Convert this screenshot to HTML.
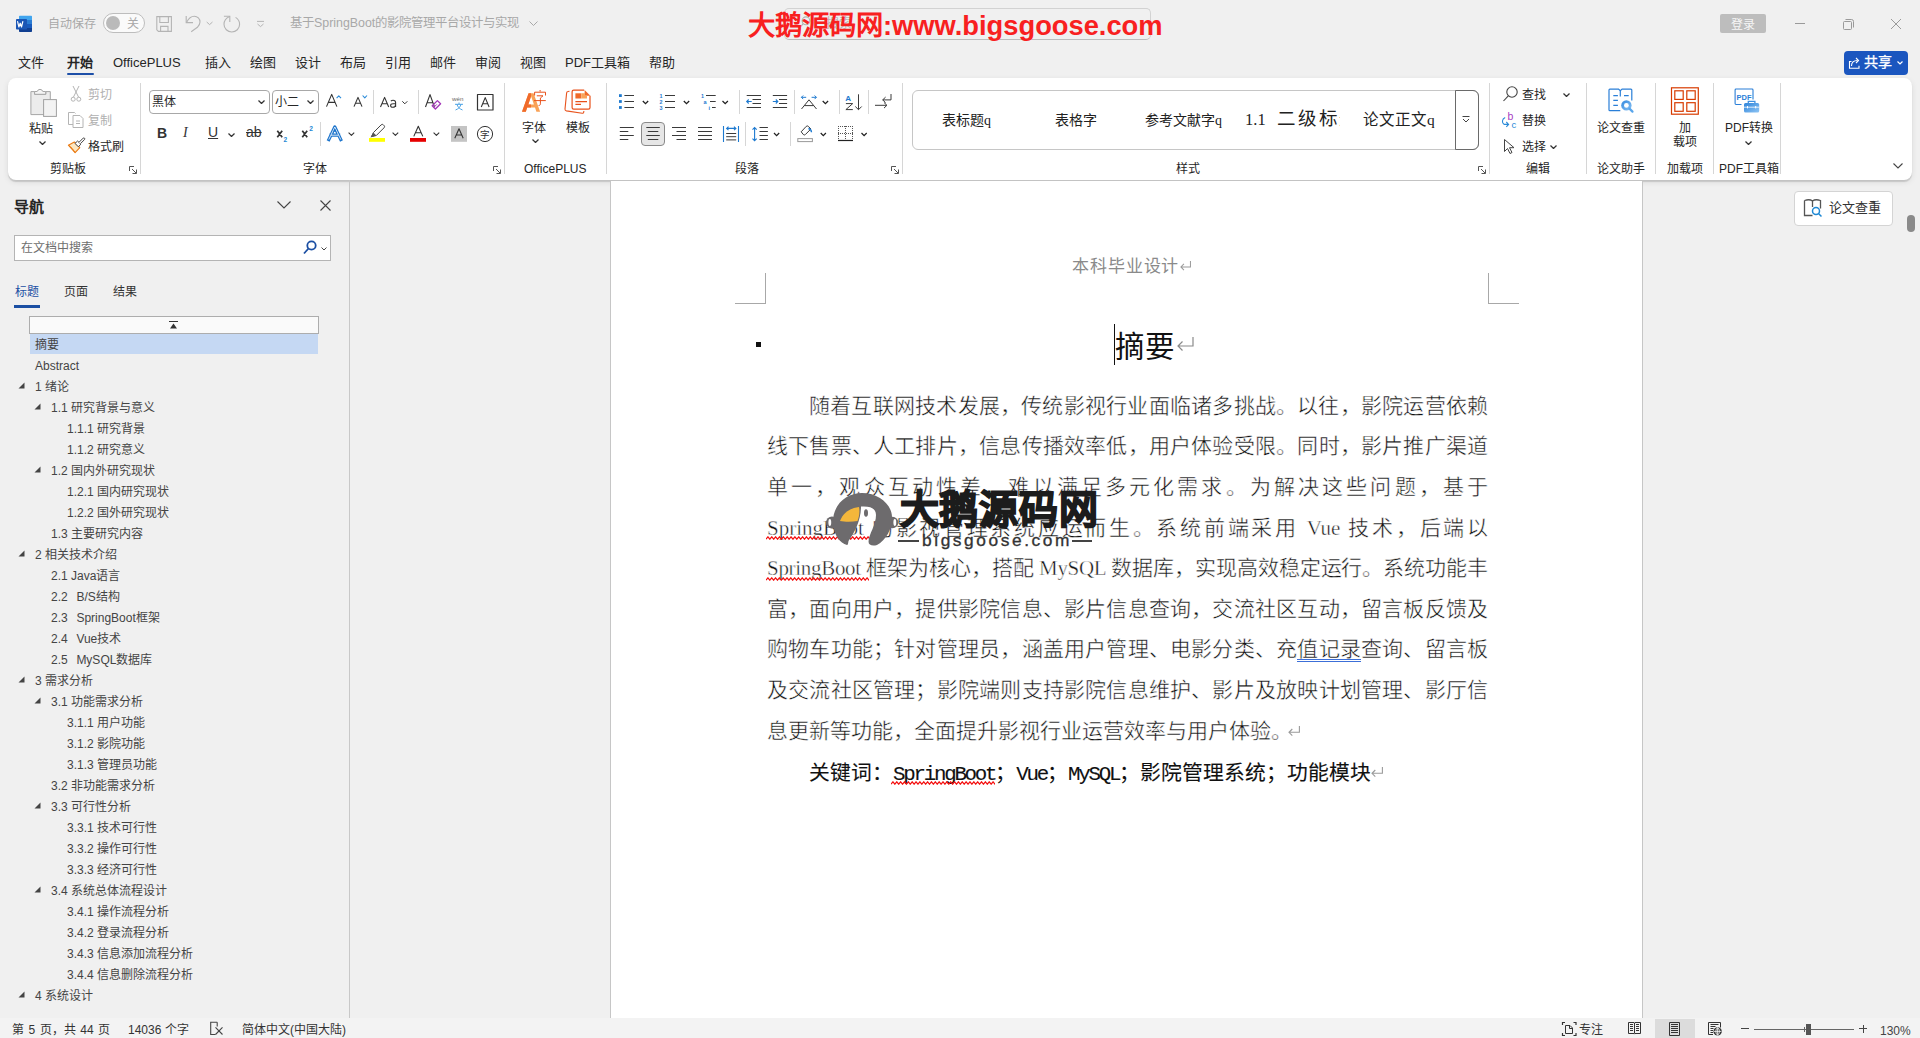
<!DOCTYPE html>
<html lang="zh-CN"><head><meta charset="utf-8">
<style>
*{box-sizing:border-box;margin:0;padding:0}
html,body{width:1920px;height:1038px;overflow:hidden;background:#f0f0f0;font-family:"Liberation Sans",sans-serif;color:#262626}
.a{position:absolute;white-space:nowrap}
.t12{font-size:12px;line-height:16px}
.t13{font-size:13px;line-height:18px}
.sep{position:absolute;width:1px;background:#d6d6d6}
svg{position:absolute;overflow:visible}
.chev{position:absolute;width:8px;height:5px}
</style></head><body>
<!-- ===== TITLE BAR ===== -->
<div id="titlebar">
 <!-- word icon -->
 <svg style="left:15px;top:15px" width="18" height="18" viewBox="15 15 18 18">
  <path d="M19 16.5a.8.8 0 0 1 .8-.8h11.4a.8.8 0 0 1 .8.8V20H19z" fill="#41a5ee"/>
  <rect x="19" y="20" width="13" height="4" fill="#2b7cd3"/><rect x="19" y="24" width="13" height="4" fill="#185abd"/>
  <path d="M19 28h13v3.2a.8.8 0 0 1-.8.8H19.8a.8.8 0 0 1-.8-.8z" fill="#103f91"/>
  <rect x="16" y="19" width="11" height="10.5" rx=".8" fill="#1b56b5"/>
  <path d="M17.6 21.6 18.9 27 20.2 23.2 21.5 27 22.8 21.6" stroke="#fff" stroke-width="1.2" fill="none" stroke-linejoin="round" stroke-linecap="round"/>
 </svg>
 <div class="a" style="left:47.5px;top:15px;font-size:12px;line-height:18px;color:#a8a8a8">自动保存</div>
 <div class="a" style="left:103px;top:13px;width:42px;height:20px;border:1px solid #bdbdbd;border-radius:10px;background:#fafafa"></div>
 <div class="a" style="left:106px;top:16px;width:14px;height:14px;border-radius:50%;background:#bababa"></div>
 <div class="a t12" style="left:127px;top:15.5px;color:#a8a8a8">关</div>
 <!-- save / undo / redo / customize -->
 <svg style="left:150px;top:10px" width="120" height="28" viewBox="150 10 120 28" fill="none" stroke="#b4b4b4" stroke-width="1.1">
  <path d="M156.8 16.6h14.6v14.8h-13l-1.6-1.6z"/><path d="M159.8 16.6v5.9h8.6v-5.9"/><path d="M160.6 31.4v-5h7.4v5"/>
  <path d="M186.2 16v6.6h6.8"/><path d="M186.6 22.2C188.5 18.5 191 16.2 194.2 16.2c3.4 0 5.8 2.6 5.8 5.8 0 2.2-1.2 3.8-2.6 5.3L191.2 31.7"/>
  <path d="M206.7 22 209.6 24.6 212.5 22" stroke-width="1"/>
  <path d="M223.9 16.3h5.9v5.6"/><path d="M229.6 16.5C226.2 18 224 20.8 224 24.3c0 4.3 3.5 7.7 7.8 7.7s7.8-3.4 7.8-7.7c0-3-1.7-5.5-4-6.9"/>
  <path d="M257 21.4h7" stroke-width="1"/><path d="M257.5 24 260.5 26.6 263.5 24" stroke-width="1"/>
 </svg>
 <div class="a" style="left:290px;top:14px;font-size:12.4px;line-height:18px;color:#a8a8a8">基于SpringBoot的影院管理平台设计与实现</div>
 <svg style="left:529px;top:21px" width="9" height="5" viewBox="0 0 9 5" fill="none" stroke="#a8a8a8" stroke-width="1"><path d="M.5.5 4.5 4.5 8.5.5"/></svg>
 <!-- search box -->
 <div class="a" style="left:784px;top:8px;width:367px;height:32px;border:1px solid #d2d2d2;border-bottom-color:#bcbcbc;border-radius:5px;background:#f0f0f0"></div>
 <svg style="left:800px;top:15px" width="12" height="13" viewBox="800 15 12 13" fill="none" stroke="#b0b0b0" stroke-width="1.1"><circle cx="806" cy="20.8" r="3.9"/><path d="M803.3 23.6 800.6 26.6"/></svg>
 <div class="a t13" style="left:826px;top:13.5px;color:#b8b8b8">搜索</div>
 <!-- watermark red -->
 <div class="a" style="left:748px;top:6.5px;font-size:27.3px;line-height:38px;font-weight:bold;color:#f8201f;letter-spacing:0px">大鹅源码网:www.bigsgoose.com</div>
 <!-- login -->
 <div class="a t12" style="left:1720px;top:14px;width:46px;height:19px;background:#bdbdbd;border-radius:2px;color:#f6f6f6;text-align:center;line-height:23px">登录</div>
 <div class="a" style="left:1795px;top:23px;width:10px;height:1px;background:#9a9a9a"></div>
 <svg style="left:1843px;top:19px" width="11" height="11" viewBox="0 0 11 11" fill="none" stroke="#9a9a9a" stroke-width="1"><rect x=".5" y="2.5" width="8" height="8" rx="1"/><path d="M2.5 .5h6a2 2 0 0 1 2 2v6"/></svg>
 <svg style="left:1891px;top:19px" width="10" height="10" viewBox="0 0 10 10" fill="none" stroke="#9a9a9a" stroke-width="1"><path d="M0 0 10 10M10 0 0 10"/></svg>
</div>
<!-- ===== MENU TABS ===== -->
<div id="tabs" style="font-size:13px;line-height:18px;color:#262626">
 <div class="a" style="left:18px;top:54px">文件</div>
 <div class="a" style="left:67px;top:54px;font-weight:bold">开始</div>
 <div class="a" style="left:67px;top:73px;width:27px;height:2px;background:#1d4fa8;border-radius:1px"></div>
 <div class="a" style="left:113px;top:54px">OfficePLUS</div>
 <div class="a" style="left:205px;top:54px">插入</div>
 <div class="a" style="left:250px;top:54px">绘图</div>
 <div class="a" style="left:295px;top:54px">设计</div>
 <div class="a" style="left:340px;top:54px">布局</div>
 <div class="a" style="left:385px;top:54px">引用</div>
 <div class="a" style="left:430px;top:54px">邮件</div>
 <div class="a" style="left:475px;top:54px">审阅</div>
 <div class="a" style="left:520px;top:54px">视图</div>
 <div class="a" style="left:565px;top:54px">PDF工具箱</div>
 <div class="a" style="left:649px;top:54px">帮助</div>
 <!-- share -->
 <div class="a" style="left:1844px;top:51px;width:64px;height:24px;background:#1b56bf;border-radius:4px"></div>
 <svg style="left:1848px;top:56px" width="14" height="14" viewBox="1848 56 14 14" fill="none" stroke="#fff" stroke-width="1.1"><path d="M1851.5 61.5h-2v6.8h9.5v-2.5"/><path d="M1851.5 66c0-3.5 2.5-5.5 6-5.5"/><path d="M1856 58l2.5 2.5-2.5 2.5"/></svg>
 <div class="a" style="left:1864px;top:51px;font-size:14px;line-height:22px;color:#fff;-webkit-text-stroke:0.3px #fff">共享</div>
 <svg style="left:1897px;top:61px" width="6" height="4" viewBox="0 0 6 4" fill="none" stroke="#fff" stroke-width="1.2"><path d="M.5.5 3 3 5.5.5"/></svg>
</div>
<!-- ===== RIBBON ===== -->
<svg width="0" height="0" style="position:absolute">
 <defs>
  <symbol id="cv" viewBox="0 0 7 4"><path d="M.5.5 3.5 3.5 6.5.5" fill="none" stroke="#333" stroke-width="1.25"/></symbol>
  <symbol id="sq" viewBox="0 0 108 4"><path d="M0 3.2 L2 0.8 L4 3.2 L6 0.8 L8 3.2 L10 0.8 L12 3.2 L14 0.8 L16 3.2 L18 0.8 L20 3.2 L22 0.8 L24 3.2 L26 0.8 L28 3.2 L30 0.8 L32 3.2 L34 0.8 L36 3.2 L38 0.8 L40 3.2 L42 0.8 L44 3.2 L46 0.8 L48 3.2 L50 0.8 L52 3.2 L54 0.8 L56 3.2 L58 0.8 L60 3.2 L62 0.8 L64 3.2 L66 0.8 L68 3.2 L70 0.8 L72 3.2 L74 0.8 L76 3.2 L78 0.8 L80 3.2 L82 0.8 L84 3.2 L86 0.8 L88 3.2 L90 0.8 L92 3.2 L94 0.8 L96 3.2 L98 0.8 L100 3.2 L102 0.8 L104 3.2 L106 0.8 L108 3.2 L110 0.8 L112 3.2" fill="none" stroke="#f41010" stroke-width="1.3"/></symbol>
  <symbol id="ln" viewBox="0 0 8 8"><path d="M.5 5V.5H5M3 3l4.2 4.2M7.5 3.5v4h-4" fill="none" stroke="#555" stroke-width="1"/></symbol>
 </defs>
</svg>
<div id="ribbon" class="a" style="left:8px;top:78px;width:1904px;height:102px;background:#fff;border-radius:8px;box-shadow:0 1.5px 1px rgba(0,0,0,.13),0 2px 6px rgba(0,0,0,.09)"></div>
<div id="rib" style="font-size:12px;line-height:20px;color:#262626">
 <!-- separators -->
 <div class="sep" style="left:140px;top:83px;height:91px"></div>
 <div class="sep" style="left:504px;top:83px;height:91px"></div>
 <div class="sep" style="left:606px;top:83px;height:91px"></div>
 <div class="sep" style="left:902px;top:83px;height:91px"></div>
 <div class="sep" style="left:1489px;top:83px;height:91px"></div>
 <div class="sep" style="left:1586px;top:83px;height:91px"></div>
 <div class="sep" style="left:1655px;top:83px;height:91px"></div>
 <div class="sep" style="left:1713px;top:83px;height:91px"></div>
 <div class="sep" style="left:1780px;top:83px;height:91px"></div>
 <!-- small seps -->
 <div class="sep" style="left:373px;top:90px;height:24px"></div>
 <div class="sep" style="left:418px;top:90px;height:24px"></div>
 <div class="sep" style="left:320px;top:122px;height:24px"></div>
 <div class="sep" style="left:739px;top:90px;height:24px"></div>
 <div class="sep" style="left:794px;top:90px;height:24px"></div>
 <div class="sep" style="left:839px;top:90px;height:24px"></div>
 <div class="sep" style="left:868px;top:90px;height:24px"></div>
 <div class="sep" style="left:745px;top:122px;height:24px"></div>
 <div class="sep" style="left:790px;top:122px;height:24px"></div>

 <!-- ===== clipboard ===== -->
 <svg style="left:28px;top:85px" width="31" height="34" viewBox="28 85 31 34">
  <path d="M30.9 91.6h3.6v2.6h11.3v-2.6h4.5v23H30.9z" fill="#ececec" stroke="#a6a6a6" stroke-width="1"/>
  <path d="M34.6 94.3v-2.8h2.6a2.9 2.9 0 0 1 5.6 0h2.9v2.8z" fill="#f4f4f4" stroke="#a6a6a6" stroke-width="1"/>
  <rect x="43.6" y="99.6" width="12.8" height="16.8" fill="#f3f3f3" stroke="#a0a0a0" stroke-width="1"/>
 </svg>
 <div class="a" style="left:29px;top:119px">粘贴</div>
 <svg style="left:39px;top:141px" width="7" height="4"><use href="#cv"/></svg>
 <svg style="left:71px;top:86px" width="10" height="16" viewBox="0 0 10 16" fill="none" stroke="#b4b4b4" stroke-width="1">
  <path d="M2 0 7.5 11M8 0 2.5 11"/><circle cx="2.2" cy="13.2" r="2"/><circle cx="7.8" cy="13.2" r="2"/>
 </svg>
 <div class="a" style="left:88px;top:85px;color:#b0b0b0">剪切</div>
 <svg style="left:68px;top:112px" width="16" height="16" viewBox="0 0 16 16" fill="none" stroke="#b4b4b4" stroke-width="1">
  <path d="M5 12.5H.5V.5h6l1 1"/><path d="M5 3.5h7l3 3v9H5z"/><path d="M8 9h4M8 11.5h4"/>
 </svg>
 <div class="a" style="left:88px;top:111px;color:#b0b0b0">复制</div>
 <svg style="left:66px;top:136px" width="20" height="19" viewBox="66 136 20 19">
  <path d="M68.4 145.2 74.3 142 79.8 147.6 75.1 152.7z" fill="#fde7c0" stroke="#ea7a12" stroke-width="1.1" stroke-linejoin="round"/>
  <path d="M68.6 145.4 72 148.3 75.1 152.5" fill="none" stroke="#ea7a12" stroke-width="1"/>
  <path d="M75 143.4 78.4 146.8 80.8 144.2 77.6 141z" fill="#fff" stroke="#444" stroke-width="1"/>
  <path d="M79 142.3 83.2 138.1a1 1 0 0 1 1.4 1.4L80.4 143.7" fill="#fff" stroke="#444" stroke-width="1"/>
 </svg>
 <div class="a" style="left:88px;top:137px">格式刷</div>
 <div class="a" style="left:50px;top:159px">剪贴板</div>
 <svg style="left:129px;top:166px" width="8" height="8"><use href="#ln"/></svg>

 <!-- ===== font ===== -->
 <div class="a" style="left:149px;top:90px;width:121px;height:24px;border:1px solid #a8a8a8;border-radius:4px;background:#fff"></div>
 <div class="a" style="left:152px;top:92px">黑体</div>
 <svg style="left:258px;top:100px" width="7" height="4"><use href="#cv"/></svg>
 <div class="a" style="left:272px;top:90px;width:47px;height:24px;border:1px solid #a8a8a8;border-radius:4px;background:#fff"></div>
 <div class="a" style="left:275px;top:92px">小二</div>
 <svg style="left:307px;top:100px" width="7" height="4"><use href="#cv"/></svg>
 <svg style="left:320px;top:86px" width="180" height="62" viewBox="320 86 180 62" fill="none" stroke-linejoin="round">
  <g stroke="#333" stroke-width="1.1">
   <path d="M326.5 106.6 331.7 94.4 336.9 106.6M328.3 102.4h6.8"/>
   <path d="M354 106.6 358 97.4 362 106.6M355.4 103.3h5.2"/>
   <path d="M380.5 107 384.6 97.4 388.7 107M381.9 103.7h5.4"/>
   <path d="M390.9 101.1c.5-.6 1.3-.9 2.2-.9 1.5 0 2.5.9 2.5 2.4V107M395.6 103.7h-2.4c-1.6 0-2.6.7-2.6 1.8s.9 1.8 2.2 1.8c1.4 0 2.8-.9 2.8-2.6"/>
   <path d="M425.5 107 430 94.6 434.5 107M427.1 102.8h6"/>
   <rect x="477.5" y="94.5" width="15.5" height="15.5" stroke-width="1.2"/>
   <path d="M481.3 107 485.2 97.6 489.1 107M482.6 103.8h5.2"/>
  </g>
  <path d="M336.6 98.2l2.2-2.4 2.2 2.4M362.6 95.5l2.2 2.4 2.2-2.4" stroke="#2a8ad8" stroke-width="1.1"/>
  <path d="M402.3 101.3l2.5 2.5 2.5-2.5" stroke="#333" stroke-width="1"/>
  <path d="M432.2 105.8 437.4 100.6 440.6 103.8 435.4 109z" stroke="#a336b8" stroke-width="1.3"/>
  <path d="M433.8 107.4 436.8 104.4" stroke="#a336b8" stroke-width="1"/>
  <text x="452" y="100.8" font-size="6.2" font-family="Liberation Sans" fill="#666" stroke="none">wén</text>
  <path d="M455 104.3h8M459 102.5v1.8M457 104.3c.5 2.5 2.5 4.5 5.5 5.7M461 104.3c-.5 2.5-2.5 4.5-5.5 5.7" stroke="#3a9ae2" stroke-width=".9"/>
 </svg>
 <!-- row 2 -->
 <div class="a" style="left:157px;top:125px;font-size:14px;line-height:16px;font-weight:bold;color:#333">B</div>
 <div class="a" style="left:183px;top:125px;font-size:14px;line-height:16px;font-style:italic;font-family:'Liberation Serif',serif;color:#333">I</div>
 <div class="a" style="left:208px;top:124px;font-size:14px;line-height:16px;text-decoration:underline;color:#333">U</div>
 <svg style="left:228px;top:133px" width="7" height="4"><use href="#cv"/></svg>
 <div class="a" style="left:246px;top:124px;font-size:14px;line-height:16px;text-decoration:line-through;color:#333">ab</div>
 <svg style="left:270px;top:120px" width="50" height="26" viewBox="270 120 50 26" fill="none">
  <path d="M277.3 130.8 282.2 137.3M282.2 130.8 277.3 137.3M302.3 130.8 307.2 137.3M307.2 130.8 302.3 137.3" stroke="#333" stroke-width="1.7"/>
  <text x="283.4" y="141.8" font-size="6.6" font-weight="bold" font-family="Liberation Sans" fill="#1e88d4">2</text>
  <text x="309.2" y="131.2" font-size="6.6" font-weight="bold" font-family="Liberation Sans" fill="#1e88d4">2</text>
 </svg>
 <svg style="left:320px;top:118px" width="180" height="30" viewBox="320 118 180 30" fill="none" stroke-linejoin="round">
  <path d="M328.8 139.6 334.8 127 340.8 139.6M331 135.2h7.6" stroke="#1c74cc" stroke-width="3.2" stroke-linecap="square"/>
  <path d="M328.8 139.6 334.8 127 340.8 139.6M331 135.2h7.6" stroke="#ffffff" stroke-width=".8"/>
  <path d="M333.2 131.8 334.8 128.5 336.4 131.8z" fill="#1c74cc" stroke="none"/>
  <path d="M348.6 132.6l2.8 2.8 2.8-2.8M392.6 132.6l2.8 2.8 2.8-2.8M433.6 132.6l2.8 2.8 2.8-2.8" stroke="#333" stroke-width="1.1"/>
  <path d="M371.5 136.6 373.4 132.6 381.1 124.9a1.6 1.6 0 0 1 2.3 0l.6.6a1.6 1.6 0 0 1 0 2.3l-7.7 7.7z" stroke="#444" stroke-width="1"/>
  <path d="M370.4 137.6 373.4 132.6 376.3 135.5z" fill="#555" stroke="none"/>
  <rect x="369" y="138" width="16" height="3.8" fill="#ffff00" stroke="none"/>
  <path d="M413.8 136.4 418.3 126.2 422.8 136.4M415.4 132.8h5.8" stroke="#333" stroke-width="1.1"/>
  <rect x="410" y="138" width="16" height="3.8" fill="#e60000" stroke="none"/>
  <rect x="451" y="126" width="16" height="15.8" fill="#c4c4c4" stroke="none"/>
  <path d="M454.8 138.2 459 128.8 463.2 138.2M456.2 135h5.6" stroke="#333" stroke-width="1.1"/>
  <circle cx="485" cy="134" r="7.6" stroke="#333" stroke-width="1"/>
  <text x="480.4" y="138.3" font-size="9.5" font-family="Liberation Sans" fill="#333" stroke="none">字</text>
 </svg>
 <div class="a" style="left:303px;top:159px">字体</div>
 <svg style="left:493px;top:166px" width="8" height="8"><use href="#ln"/></svg>

 <!-- ===== OfficePLUS ===== -->
 <svg style="left:518px;top:86px" width="32" height="30" viewBox="518 86 32 30">
  <defs><clipPath id="ahalf"><rect x="518" y="86" width="13.1" height="30"/></clipPath></defs>
  <path d="M522 111.8 528.6 93.3H533.6L540.1 111.8H536.4L535 107.6H527.2L525.8 111.8ZM528.3 104.4H533.9L531.1 96.2Z" fill="#f9a257" fill-rule="evenodd"/>
  <path d="M522 111.8 528.6 93.3H533.6L540.1 111.8H536.4L535 107.6H527.2L525.8 111.8ZM528.3 104.4H533.9L531.1 96.2Z" fill="#f06a2a" fill-rule="evenodd" clip-path="url(#ahalf)"/>
  <g stroke="#e8501a" stroke-width="1" fill="none"><path d="M540.1 90v1.6M534.6 95.5v-3.3h10.9v3.3M536.8 95.8h6.2l-2.6 2.2v5.8c0 1.2-.6 1.7-1.8 1.7M534 100.6h11.8"/></g>
 </svg>
<div class="a" style="left:522px;top:118px">字体</div>
 <svg style="left:532px;top:139px" width="7" height="4"><use href="#cv"/></svg>
 <svg style="left:563px;top:87px" width="30" height="28" viewBox="563 87 30 28">
  <path d="M569.5 91.2 568 91.5c-.8.1-1.3.8-1.4 1.6l-1.6 16c-.1.9.5 1.6 1.4 1.8l15.8 2.3c.8.1 1.5-.4 1.6-1.2v-.9" fill="none" stroke="#e8541e" stroke-width="1.1"/>
  <path d="M584.2 90.2h-10.5a1.6 1.6 0 0 0-1.6 1.6v15.7a1.6 1.6 0 0 0 1.6 1.6h14.7a1.6 1.6 0 0 0 1.6-1.6V95.7" fill="#fff" stroke="#e8501a" stroke-width="1.2"/>
  <path d="M584.6 90 590.4 95.8H584.6z" fill="#f06a2a"/>
  <rect x="575.4" y="93.3" width="6" height="5.2" fill="#f06a2a"/><path d="M581.4 93.3h3.5v2.3h2.1v2.9h-5.6z" fill="#f9a257"/>
  <path d="M575.4 101.6h11.6M575.4 104.4h5.6" stroke="#e8501a" stroke-width="1.1"/>
 </svg>
 <div class="a" style="left:566px;top:118px">模板</div>
 <div class="a" style="left:524px;top:159px">OfficePLUS</div>

 <!-- ===== paragraph ===== -->
 <div class="a" style="left:641px;top:122px;width:24px;height:24px;border:1px solid #8a8a8a;border-radius:4px;background:#e6e6e6"></div>
 <svg style="left:610px;top:86px" width="290" height="64" viewBox="610 86 290 64" fill="none">
  <g fill="#1e7ad0"><rect x="619" y="94.2" width="2.8" height="2.8"/><rect x="619" y="100.1" width="2.8" height="2.8"/><rect x="619" y="106.1" width="2.8" height="2.8"/></g>
  <g stroke="#3a3a3a" stroke-width="1">
   <path d="M624.4 95.5h9.6M624.4 101.5h9.6M624.4 107.5h9.6"/>
   <path d="M665 95.5h10M665 101.5h10M665 107.5h10"/>
   <path d="M706 95.5h9.7M710 101.5h5.7M712 107.5h3.7"/>
   <path d="M746.7 95.5h14.3M752.5 99.5h8.5M752.5 103.5h8.5M746.7 107.5h14.3"/>
   <path d="M772.8 95.5h14.3M779 99.5h8.1M779 103.5h8.1M772.8 107.5h14.3"/>
   <path d="M801.5 109 809 99.8 816.5 109M804.3 105.6h9.4"/>
   <path d="M858.5 94.3v15.2M855.3 106.5l3.2 3.2 3.2-3.2"/>
   <path d="M845.9 103.6h6.8l-6.8 6h6.9"/>
   <path d="M891 94v5.9h-8.3M885.6 97.1l-2.9 2.8 2.9 2.8M875 105.3h11.8M884 102.5l2.9 2.8-2.9 2.8"/>
   <path d="M642.8 101l2.7 2.7 2.7-2.7M683.8 101l2.7 2.7 2.7-2.7M722.5 101l2.7 2.7 2.7-2.7M822.7 101l2.7 2.7 2.7-2.7" stroke="#222" stroke-width="1.25"/>
  </g>
  <g font-family="Liberation Sans" font-weight="bold" fill="#1e7ad0" stroke="none">
   <text x="659.4" y="97.9" font-size="5.4">1</text><text x="659.4" y="103.9" font-size="5.4">2</text><text x="659.4" y="109.9" font-size="5.4">3</text>
   <text x="701" y="97.9" font-size="5.4">1</text><text x="703.4" y="103.9" font-size="5.6">a</text><text x="708.6" y="109.9" font-size="5.6">i</text>
  </g>
  <path d="M801.4 97.3h4.8M803.2 95.5l-1.8 1.8 1.8 1.8M811.6 97.3h4.8M814.6 95.5l1.8 1.8-1.8 1.8" stroke="#1e7ad0" stroke-width="1"/>
  <path d="M746.7 101.5h5M748.7 99.5l-2 2 2 2M772.8 101.5h5M775.8 99.5l2 2-2 2" stroke="#1e7ad0" stroke-width="1.1"/>
  <text x="845.2" y="101" font-size="8" font-family="Liberation Sans" font-weight="bold" fill="#1e7ad0">A</text>
  <!-- row 2 -->
  <g stroke="#3a3a3a" stroke-width="1">
   <path d="M619.8 127.5h14M619.8 131.5h8.5M619.8 135.5h14M619.8 139.5h8.5"/>
   <path d="M646.3 127.5h13.5M647.8 131.5h10.5M646.3 135.5h13.5M647.8 139.5h10.5"/>
   <path d="M672 127.5h14M676.5 131.5h9.5M672 135.5h14M676.5 139.5h9.5"/>
   <path d="M698 127.5h14M698 131.5h14M698 135.5h14M698 139.5h14"/>
   <path d="M726.2 133.5h10M726.2 136.7h10M726.2 139.9h10"/>
   <path d="M759.5 127.5h8.4M759.5 131.5h8.4M759.5 135.5h8.4M759.5 139.5h8.4"/>
   <path d="M774 133l2.6 2.6 2.6-2.6M820.7 133l2.6 2.6 2.6-2.6M861.5 133l2.6 2.6 2.6-2.6" stroke="#222" stroke-width="1.25"/>
   <path d="M801.2 131.8l5-5.4a1.6 1.6 0 0 1 2.2 0l2.5 2.6-5.5 5.5a1.5 1.5 0 0 1-2.1 0z"/>
  </g>
  <path d="M723.5 126v16M738.5 126v16M726.5 128.4h9.5M728.5 126.6l-1.9 1.8 1.9 1.8M734 126.6l1.9 1.8-1.9 1.8" stroke="#1e7ad0" stroke-width="1.1"/>
  <path d="M754.6 127.6v13M752.5 129.6l2.1-2.1 2.1 2.1M752.5 138.6l2.1 2.1 2.1-2.1" stroke="#1e7ad0" stroke-width="1.1"/>
  <path d="M808.4 128.5c1.8.4 3 1.8 3.1 3.8" stroke="#1e7ad0" stroke-width="1.3"/>
  <rect x="797.8" y="138.6" width="14.6" height="3" stroke="#9a9a9a" stroke-width="1"/>
  <g stroke="#555" stroke-width="1" stroke-dasharray="1 1">
   <path d="M838 126.5h15M838.5 126v14M852.5 126v14M845.5 126v14M838 133.5h15"/>
  </g>
  <path d="M838 140.5h15" stroke="#222" stroke-width="1.2"/>
 </svg>
 <div class="a" style="left:735px;top:159px">段落</div>
 <svg style="left:891px;top:166px" width="8" height="8"><use href="#ln"/></svg>

 <!-- ===== styles ===== -->
 <div class="a" style="left:912px;top:90px;width:567px;height:60px;border:1px solid #c6c6c6;border-radius:6px;background:#fff"></div>
 <div class="a" style="left:1455px;top:90px;width:24px;height:60px;border:1px solid #6a6a6a;border-radius:0 6px 6px 0"></div>
 <svg style="left:1462px;top:116px" width="8" height="7" viewBox="0 0 8 7" fill="none" stroke="#444" stroke-width="1"><path d="M.5.5h7M1 3 4 6l3-3"/></svg>
 <div class="a" style="left:942px;top:111px;font-size:14px;line-height:18px;color:#222">表标题<span style="font-family:'Liberation Serif',serif">q</span></div>
 <div class="a" style="left:1055px;top:111px;font-size:14px;line-height:18px;color:#222">表格字</div>
 <div class="a" style="left:1145px;top:111px;font-size:14px;line-height:18px;color:#222">参考文献字<span style="font-family:'Liberation Serif',serif">q</span></div>
 <div class="a" style="left:1245px;top:110px;font-size:16.5px;line-height:20px;color:#222;font-family:'Liberation Serif',serif">1.1</div>
 <div class="a" style="left:1277px;top:108px;font-size:18.5px;line-height:22px;letter-spacing:1.8px;color:#222;width:63px;overflow:hidden">二级标题</div>
 <div class="a" style="left:1363px;top:110px;font-size:15.5px;line-height:20px;color:#222">论文正文<span style="font-family:'Liberation Serif',serif">q</span></div>
 <div class="a" style="left:1176px;top:159px">样式</div>
 <svg style="left:1478px;top:166px" width="8" height="8"><use href="#ln"/></svg>

 <!-- ===== editing ===== -->
 <svg style="left:1503px;top:86px" width="15" height="16" viewBox="0 0 15 16" fill="none" stroke="#444" stroke-width="1.1"><circle cx="9" cy="6" r="5.2"/><path d="M5.3 9.8 .5 15"/></svg>
 <div class="a" style="left:1522px;top:85px">查找</div>
 <svg style="left:1563px;top:93px" width="7" height="4"><use href="#cv"/></svg>
 <svg style="left:1501px;top:110px" width="18" height="20" viewBox="0 0 18 20"><text x="6.6" y="9.8" font-size="10.5" font-family="Liberation Sans" fill="#a640c2">b</text><text x="10.6" y="17.8" font-size="9.5" font-family="Liberation Sans" fill="#2a8ad8">c</text><path d="M4.2 7.6C.8 9 .6 13 3.2 14.4h4.2M5.3 12l2.3 2.4-2.3 2.4" fill="none" stroke="#2a8ad8" stroke-width="1.1"/></svg>
 <div class="a" style="left:1522px;top:111px">替换</div>
 <svg style="left:1504px;top:139px" width="11" height="15" viewBox="0 0 11 15" fill="none" stroke="#444" stroke-width="1"><path d="M.5.5v12l3-3 2.5 5 2-1-2.5-4.8H10z"/></svg>
 <div class="a" style="left:1522px;top:137px">选择</div>
 <svg style="left:1550px;top:145px" width="7" height="4"><use href="#cv"/></svg>
 <div class="a" style="left:1526px;top:159px">编辑</div>

 <!-- ===== 论文助手 ===== -->
 <svg style="left:1605px;top:85px" width="32" height="32" viewBox="1605 85 32 32" fill="none">
  <defs><linearGradient id="mg" x1="0" y1="0" x2="1" y2="1"><stop offset="0" stop-color="#2f86dd"/><stop offset="1" stop-color="#8cc4f5"/></linearGradient></defs>
  <path d="M1620.3 110.6h-10.4a.9.9 0 0 1-.9-.9V90a.9.9 0 0 1 .9-.9h8.6l1.8 1.6 1.8-1.6h8.8a.9.9 0 0 1 .9.9v10.5" stroke="#2a7fd8" stroke-width="1.2"/>
  <path d="M1620.3 90.6v6" stroke="#2a7fd8" stroke-width="1.2"/>
  <path d="M1613.3 95.6h4.6M1613.3 100.3h4.6M1613.3 105.4h4.6M1624 95.6h4.7" stroke="#2a7fd8" stroke-width="1.2"/>
  <circle cx="1626.4" cy="105.4" r="5.2" fill="url(#mg)"/><circle cx="1626.4" cy="105.4" r="2.4" fill="#fff"/>
  <path d="M1629.5 108.6l3 3" stroke="#5aa6ec" stroke-width="2.2" stroke-linecap="round"/>
 </svg>
 <div class="a" style="left:1597px;top:118px">论文查重</div>
 <div class="a" style="left:1597px;top:159px">论文助手</div>

 <!-- ===== 加载项 ===== -->
 <svg style="left:1670px;top:86px" width="30" height="30" viewBox="1670 86 30 30" fill="none" stroke="#d83b01" stroke-width="1.2">
  <rect x="1671.5" y="87.8" width="26.8" height="26.4"/><rect x="1674.8" y="90.8" width="8.4" height="8.6"/><rect x="1686.8" y="90.8" width="8.4" height="8.6"/><rect x="1674.8" y="102.7" width="8.4" height="8.6"/><rect x="1686.8" y="102.7" width="8.4" height="8.6"/>
 </svg>
 <div class="a" style="left:1679px;top:118px">加</div>
 <div class="a" style="left:1673px;top:132px">载项</div>
 <div class="a" style="left:1667px;top:159px">加载项</div>

 <!-- ===== PDF ===== -->
 <svg style="left:1733px;top:87px" width="28" height="28" viewBox="1733 87 28 28">
  <defs><linearGradient id="tb" x1="0" y1="0" x2="1" y2="1"><stop offset="0" stop-color="#2d83da"/><stop offset="1" stop-color="#8fc5f4"/></linearGradient></defs>
  <path d="M1741.5 104.5h-5.5a.9.9 0 0 1-.9-.9V89.9a.9.9 0 0 1 .9-.9h16.1a.9.9 0 0 1 .9.9v9.5" fill="none" stroke="#2a7fd8" stroke-width="1.1"/>
  <text x="1736.6" y="99.6" font-size="7.6" font-weight="bold" font-family="Liberation Sans" fill="#2a7fd8" textLength="15" lengthAdjust="spacingAndGlyphs">PDF</text>
  <path d="M1748.3 103v-1.6h6.6v1.6" fill="none" stroke="#3d8fe0" stroke-width="1.3"/>
  <rect x="1744" y="103" width="15.2" height="9.6" rx="1.6" fill="url(#tb)"/>
  <path d="M1744 107.2h15.2" stroke="#fff" stroke-width=".8"/><path d="M1747.5 106v2.4M1755.7 106v2.4" stroke="#fff" stroke-width="1"/>
 </svg>
 <div class="a" style="left:1725px;top:118px">PDF转换</div>
 <svg style="left:1745px;top:141px" width="7" height="4"><use href="#cv"/></svg>
 <div class="a" style="left:1719px;top:158.5px">PDF工具箱</div>
 <svg style="left:1893px;top:163px" width="10" height="6" viewBox="0 0 10 6" fill="none" stroke="#444" stroke-width="1.1"><path d="M.5.5 5 5 9.5.5"/></svg>
</div>
<!-- ===== NAV PANE ===== -->
<div id="nav" style="font-size:12px;line-height:18px;color:#333">
 <div class="a" style="left:349px;top:180px;width:1px;height:838px;background:#c8c8c8"></div>
 <div class="a" style="left:14px;top:198px;font-size:15px;line-height:18px;font-weight:bold;color:#262626">导航</div>
 <svg style="left:277px;top:201px" width="14" height="8" viewBox="0 0 14 8" fill="none" stroke="#444" stroke-width="1.1"><path d="M.5.5 7 7 13.5.5"/></svg>
 <svg style="left:320px;top:200px" width="11" height="11" viewBox="0 0 11 11" fill="none" stroke="#444" stroke-width="1.1"><path d="M.5.5 10.5 10.5M10.5.5.5 10.5"/></svg>
 <div class="a" style="left:14px;top:235px;width:317px;height:26px;border:1px solid #b4b4b4;background:#fff"></div>
 <div class="a" style="left:21px;top:239px;color:#6e6e6e">在文档中搜索</div>
 <svg style="left:303px;top:240px" width="14" height="15" viewBox="0 0 14 15" fill="none" stroke="#1b4fa3" stroke-width="1.8"><circle cx="8.5" cy="5.5" r="4.2"/><path d="M5.5 8.5 1 13.5"/></svg>
 <svg style="left:321px;top:247px" width="6" height="4" viewBox="0 0 6 4" fill="none" stroke="#444" stroke-width="1"><path d="M.5.5 3 3 5.5.5"/></svg>
 <div class="a" style="left:15px;top:283px;color:#1b4fa3">标题</div>
 <div class="a" style="left:14px;top:305px;width:26px;height:3px;background:#1b4fa3"></div>
 <div class="a" style="left:64px;top:283px">页面</div>
 <div class="a" style="left:113px;top:283px">结果</div>
 <div class="a" style="left:29px;top:316px;width:290px;height:18px;border:1px solid #adadad;background:#fafafa"></div>
 <svg style="left:169px;top:321px" width="9" height="8" viewBox="0 0 9 8"><path d="M0 .5h9" stroke="#333"/><path d="M1 7.5 4.5 2.5 8 7.5z" fill="#333"/></svg>
 <div class="a" style="left:30px;top:334px;width:288px;height:20px;background:#c5d8f3"></div>
 <div id="navlist" style="color:#444">
 <div class="a" style="left:35px;top:335.5px">摘要</div>
 <div class="a" style="left:35px;top:356.5px">Abstract</div>
 <div class="a" style="left:35px;top:377.5px">1 绪论</div>
 <svg style="left:18px;top:381.5px" width="7" height="7" viewBox="0 0 7 7"><path d="M6.5 .5v6h-6z" fill="#444"/></svg>
 <div class="a" style="left:51px;top:398.5px">1.1 研究背景与意义</div>
 <svg style="left:34px;top:402.5px" width="7" height="7" viewBox="0 0 7 7"><path d="M6.5 .5v6h-6z" fill="#444"/></svg>
 <div class="a" style="left:67px;top:419.5px">1.1.1 研究背景</div>
 <div class="a" style="left:67px;top:440.5px">1.1.2 研究意义</div>
 <div class="a" style="left:51px;top:461.5px">1.2 国内外研究现状</div>
 <svg style="left:34px;top:465.5px" width="7" height="7" viewBox="0 0 7 7"><path d="M6.5 .5v6h-6z" fill="#444"/></svg>
 <div class="a" style="left:67px;top:482.5px">1.2.1 国内研究现状</div>
 <div class="a" style="left:67px;top:503.5px">1.2.2 国外研究现状</div>
 <div class="a" style="left:51px;top:524.5px">1.3 主要研究内容</div>
 <div class="a" style="left:35px;top:545.5px">2 相关技术介绍</div>
 <svg style="left:18px;top:549.5px" width="7" height="7" viewBox="0 0 7 7"><path d="M6.5 .5v6h-6z" fill="#444"/></svg>
 <div class="a" style="left:51px;top:566.5px">2.1 Java语言</div>
 <div class="a" style="left:51px;top:587.5px">2.2<span style="display:inline-block;width:8.7px"></span>B/S结构</div>
 <div class="a" style="left:51px;top:608.5px">2.3<span style="display:inline-block;width:8.7px"></span>SpringBoot框架</div>
 <div class="a" style="left:51px;top:629.5px">2.4<span style="display:inline-block;width:8.7px"></span>Vue技术</div>
 <div class="a" style="left:51px;top:650.5px">2.5<span style="display:inline-block;width:8.7px"></span>MySQL数据库</div>
 <div class="a" style="left:35px;top:671.5px">3 需求分析</div>
 <svg style="left:18px;top:675.5px" width="7" height="7" viewBox="0 0 7 7"><path d="M6.5 .5v6h-6z" fill="#444"/></svg>
 <div class="a" style="left:51px;top:692.5px">3.1 功能需求分析</div>
 <svg style="left:34px;top:696.5px" width="7" height="7" viewBox="0 0 7 7"><path d="M6.5 .5v6h-6z" fill="#444"/></svg>
 <div class="a" style="left:67px;top:713.5px">3.1.1 用户功能</div>
 <div class="a" style="left:67px;top:734.5px">3.1.2 影院功能</div>
 <div class="a" style="left:67px;top:755.5px">3.1.3 管理员功能</div>
 <div class="a" style="left:51px;top:776.5px">3.2 非功能需求分析</div>
 <div class="a" style="left:51px;top:797.5px">3.3 可行性分析</div>
 <svg style="left:34px;top:801.5px" width="7" height="7" viewBox="0 0 7 7"><path d="M6.5 .5v6h-6z" fill="#444"/></svg>
 <div class="a" style="left:67px;top:818.5px">3.3.1 技术可行性</div>
 <div class="a" style="left:67px;top:839.5px">3.3.2 操作可行性</div>
 <div class="a" style="left:67px;top:860.5px">3.3.3 经济可行性</div>
 <div class="a" style="left:51px;top:881.5px">3.4 系统总体流程设计</div>
 <svg style="left:34px;top:885.5px" width="7" height="7" viewBox="0 0 7 7"><path d="M6.5 .5v6h-6z" fill="#444"/></svg>
 <div class="a" style="left:67px;top:902.5px">3.4.1 操作流程分析</div>
 <div class="a" style="left:67px;top:923.5px">3.4.2 登录流程分析</div>
 <div class="a" style="left:67px;top:944.5px">3.4.3 信息添加流程分析</div>
 <div class="a" style="left:67px;top:965.5px">3.4.4 信息删除流程分析</div>
 <div class="a" style="left:35px;top:986.5px">4 系统设计</div>
 <svg style="left:18px;top:990.5px" width="7" height="7" viewBox="0 0 7 7"><path d="M6.5 .5v6h-6z" fill="#444"/></svg>
</div><!--navend-->
</div>
<!-- ===== DOCUMENT ===== -->
<div id="doc">
 <div class="a" style="left:610px;top:181px;width:1033px;height:837px;background:#fff;border-left:1px solid #c6c6c6;border-right:1px solid #c6c6c6"></div>
 <div class="a" style="left:1072px;top:257px;font-size:17px;line-height:20px;letter-spacing:0.9px;color:#8a8a8a">本科毕业设计</div>
 <div class="a" style="left:735px;top:303px;width:31px;height:1px;background:#a8a8a8"></div>
 <div class="a" style="left:765px;top:273px;width:1px;height:31px;background:#a8a8a8"></div>
 <div class="a" style="left:1488px;top:273px;width:1px;height:31px;background:#a8a8a8"></div>
 <div class="a" style="left:1488px;top:303px;width:31px;height:1px;background:#a8a8a8"></div>
 <div class="a" style="left:756px;top:342px;width:5px;height:5px;background:#111"></div>
 <div class="a" style="left:1114px;top:324px;width:1px;height:41px;background:#111"></div>
 <div class="a" style="left:1115px;top:327.5px;font-size:29.5px;line-height:38px;color:#111">摘要</div>
 <svg style="left:1176px;top:337px" width="18" height="15" viewBox="0 0 18 15" fill="none" stroke="#8a8a8a" stroke-width="1.2"><path d="M17 0v9H2M6.5 4.5 2 9l4.5 4.5"/></svg>
 <div id="body" style="font-family:'Liberation Serif',serif;font-size:21px;line-height:26px;color:#111;-webkit-text-stroke:0.45px #fff">
  <div class="a" style="left:809px;top:392.7px;width:679px;text-align:justify;text-align-last:justify">随着互联网技术发展，传统影视行业面临诸多挑战。以往，影院运营依赖</div>
  <div class="a" style="left:767px;top:433.3px;width:721px;text-align:justify;text-align-last:justify">线下售票、人工排片，信息传播效率低，用户体验受限。同时，影片推广渠道</div>
  <div class="a" style="left:767px;top:473.9px;width:721px;text-align:justify;text-align-last:justify">单一，观众互动性差，难以满足多元化需求。为解决这些问题，基于</div>
  <div class="a" style="left:767px;top:514.5px;width:721px;text-align:justify;text-align-last:justify">SpringBoot 的影视管理系统应运而生。系统前端采用 Vue 技术，后端以</div>
  <div class="a" style="left:767px;top:555.1px;width:721px;text-align:justify;text-align-last:justify;letter-spacing:-0.3px">SpringBoot 框架为核心，搭配 MySQL 数据库，实现高效稳定运行。系统功能丰</div>
  <div class="a" style="left:767px;top:595.7px;width:721px;text-align:justify;text-align-last:justify">富，面向用户，提供影院信息、影片信息查询，交流社区互动，留言板反馈及</div>
  <div class="a" style="left:767px;top:636.3px;width:721px;text-align:justify;text-align-last:justify">购物车功能；针对管理员，涵盖用户管理、电影分类、充值记录查询、留言板</div>
  <div class="a" style="left:767px;top:676.9px;width:721px;text-align:justify;text-align-last:justify">及交流社区管理；影院端则支持影院信息维护、影片及放映计划管理、影厅信</div>
  <div class="a" style="left:767px;top:717.5px">息更新等功能，全面提升影视行业运营效率与用户体验。</div>
 </div>
 <div class="a" style="left:809px;top:759.5px;font-size:20.8px;line-height:26px;color:#111;-webkit-text-stroke:0.1px #111">关键词：<span style="font-family:'Liberation Mono',monospace;letter-spacing:-2.25px">SpringBoot</span>；<span style="font-family:'Liberation Mono',monospace;letter-spacing:-2.25px">Vue</span>；<span style="font-family:'Liberation Mono',monospace;letter-spacing:-2.25px">MySQL</span>；影院管理系统；功能模块</div>

 <svg style="left:1287.5px;top:726px" width="12" height="10" viewBox="0 0 12 10" preserveAspectRatio="none" fill="none" stroke="#9a9a9a" stroke-width="1.1"><path d="M11.4 0v6.3H1M4.3 3 1 6.3 4.3 9.6"/></svg>
 <svg style="left:1370.5px;top:766.5px" width="12" height="10" viewBox="0 0 12 10" preserveAspectRatio="none" fill="none" stroke="#9a9a9a" stroke-width="1.1"><path d="M11.4 0v6.3H1M4.3 3 1 6.3 4.3 9.6"/></svg>
 <svg style="left:1180px;top:261px" width="11" height="9.5" viewBox="0 0 12 10" preserveAspectRatio="none" fill="none" stroke="#9a9a9a" stroke-width="1.1"><path d="M11.4 0v6.3H1M4.3 3 1 6.3 4.3 9.6"/></svg>
 <!-- squiggles -->
 <svg style="left:766px;top:536px" width="104" height="4"><use href="#sq" width="104" height="4"/></svg>
 <svg style="left:766px;top:577px" width="103" height="4"><use href="#sq" width="103" height="4"/></svg>
 <svg style="left:891px;top:781px" width="104" height="4"><use href="#sq" width="104" height="4"/></svg>
 <div class="a" style="left:1297px;top:658.5px;width:64px;height:1px;background:#3c6fd8"></div>
 <div class="a" style="left:1297px;top:660.5px;width:64px;height:1px;background:#3c6fd8"></div>
 <!-- watermark logo -->
 <div id="wm">
  <svg style="left:820px;top:485px" width="85" height="65" viewBox="820 485 85 65">
   <circle cx="832" cy="522.5" r="6" fill="#6d6b6d"/><circle cx="892.5" cy="522.5" r="5.8" fill="#6d6b6d"/>
   <path d="M847 545 C840 543,834 535,833 524 C832 505,846 493,862 493 C879 493,892 505,892 517 C892 530,886 540,877 545 C872 546.5,868 545,868.6 541 C869 534,876 525,876 515 C876 508,870 506,861 506.6 C861 520,855 532,848.5 541 C848 543.5,848 545,847 545 Z" fill="#6d6b6d"/>
   <ellipse cx="829.8" cy="522.5" rx="1.4" ry="3.4" fill="#fff"/><ellipse cx="894.8" cy="522.5" rx="1.4" ry="3.4" fill="#fff"/>
   <path d="M840 521 C843 513,850 508,859 507 C860 512,859 517,857.5 521 C852 522,845 522,840 521 Z" fill="#f4b73b"/>
   <ellipse cx="866" cy="513" rx="2" ry="3.8" fill="#6d6b6d"/>
  </svg>
  <div class="a" style="left:899.5px;top:487px;font-size:39px;line-height:46px;font-weight:900;letter-spacing:0.8px;color:#1c1c1c;-webkit-text-stroke:1.6px #1c1c1c">大鹅源码网</div>
  <div class="a" style="left:898px;top:539.5px;width:21px;height:2px;background:#444"></div>
  <div class="a" style="left:1072px;top:539.5px;width:20px;height:2px;background:#444"></div>
  <div class="a" style="left:922px;top:531px;font-size:17.3px;line-height:18px;letter-spacing:2.6px;color:#333;-webkit-text-stroke:0.35px #333">bigsgoose.com</div>
 </div>
</div>
<!-- ===== STATUS BAR ===== -->
<div id="status" style="font-size:12px;line-height:19px;color:#333">
 <div class="a" style="left:0;top:1018px;width:1920px;height:20px;background:#f3f3f3"></div>
 <div class="a" style="left:12px;top:1021px;word-spacing:1.2px">第 5 页，共 44 页</div>
 <div class="a" style="left:128px;top:1021px">14036 个字</div>
 <svg style="left:209px;top:1021px" width="16" height="15" viewBox="209 1021 16 15" fill="none" stroke="#444" stroke-width="1.1"><path d="M215.5 1034.5h-4.8v-12.2h6.5"/><path d="M217.2 1022.3v4.2M215.5 1027.3l7 7.2M222.5 1027.3l-7 7.2"/></svg>
 <div class="a" style="left:242px;top:1021px">简体中文(中国大陆)</div>
 
 <div class="a" style="left:1655px;top:1019px;width:40px;height:19px;background:#dcdcdc"></div>
<svg style="left:1555px;top:1016px" width="180" height="22" viewBox="1555 1016 180 22" fill="none" stroke="#333" stroke-width="1">
  <path d="M1562.5 1025v-2.5h2.5M1573.5 1022.5h2.5v2.5M1576 1033v2.5h-2.5M1565 1035.5h-2.5v-2.5" stroke-width="1.2"/>
  <path d="M1565.5 1033.5v-8h4.5l2.5 2.5v5.5z"/><path d="M1569.5 1025.5v3h3"/>
  <path d="M1628.5 1022.5h5.5l.5.6.5-.6h5.5v11h-5.5l-.5.6-.5-.6h-5.5z"/><path d="M1634.5 1023v10.5"/>
  <path d="M1630 1024.5h3M1630 1026.5h3M1630 1028.5h3M1630 1030.5h3M1636 1024.5h3M1636 1026.5h3M1636 1028.5h3M1636 1030.5h3"/>
  <path d="M1669.5 1022.5h10v13h-10z"/><path d="M1671 1024.5h7M1671 1026.5h7M1671 1028.5h7M1671 1030.5h7M1671 1032.5h7"/>
  <path d="M1713 1034.5h-4.5v-12h12v5"/><path d="M1710.5 1024.5h8M1710.5 1026.5h5M1710.5 1028.5h3M1710.5 1030.5h2.5M1710.5 1032.5h2.5"/>
  <circle cx="1717.6" cy="1031.4" r="4.2" fill="#333" stroke="none"/>
  <path d="M1713.8 1031.4h7.6M1717.6 1027.6v7.6" stroke="#fff" stroke-width=".8"/><ellipse cx="1717.6" cy="1031.4" rx="1.8" ry="3.4" stroke="#fff" stroke-width=".8"/>
 </svg>
 <div class="a" style="left:1579px;top:1021px">专注</div>
 
 
 
 <div class="a" style="left:1741px;top:1028px;width:8px;height:1px;background:#444"></div>
 <div class="a" style="left:1754px;top:1029px;width:100px;height:1px;background:#666"></div>
 <div class="a" style="left:1804px;top:1027px;width:1px;height:5px;background:#666"></div>
 <div class="a" style="left:1806px;top:1024px;width:5px;height:11px;background:#555"></div>
 <div class="a" style="left:1859px;top:1028px;width:8px;height:1px;background:#444"></div>
 <div class="a" style="left:1862.5px;top:1024.5px;width:1px;height:8px;background:#444"></div>
 <div class="a" style="left:1880px;top:1021.5px;color:#444">130%</div>
</div>
<!-- scrollbar + 论文查重 button -->
<div class="a" style="left:1794px;top:191px;width:99px;height:35px;border:1px solid #d4d4d4;border-radius:4px;background:#fff"></div>
<svg style="left:1803px;top:198px" width="21" height="20" viewBox="0 0 21 20" fill="none"><path d="M1.5 2.5v15h8M1.5 2.5c3-1 6-1 8 .5 2-1.5 5-1.5 8-.5v8M9.5 3v6" stroke="#555" stroke-width="1.3"/><circle cx="13" cy="13" r="3.5" stroke="#1e88d4" stroke-width="1.5"/><path d="M15.5 15.5 18.5 18.5" stroke="#1e88d4" stroke-width="1.5"/></svg>
<div class="a" style="left:1829px;top:199px;font-size:13px;line-height:17px;color:#333">论文查重</div>
<div class="a" style="left:1907px;top:215px;width:8px;height:17px;border-radius:4px;background:#8a8a8a"></div>
</body></html>
